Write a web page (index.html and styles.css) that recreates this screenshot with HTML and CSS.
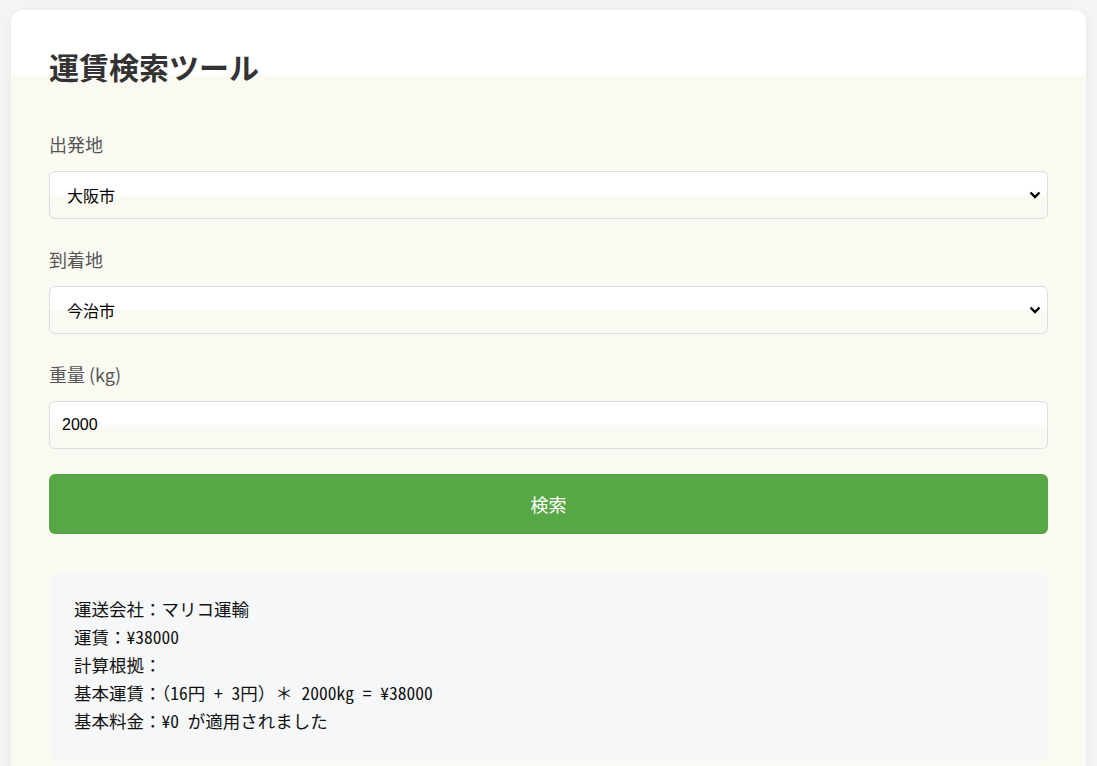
FILE: index.html
```html
<!DOCTYPE html>
<html lang="ja">
<head>
    <meta charset="UTF-8">
    <meta name="viewport" content="width=device-width, initial-scale=1.0">
    <title>運賃検索ツール</title>
    <link rel="stylesheet" href="styles.css">
</head>
<body>
<div class="container">
    <h1>運賃検索ツール</h1>
    <div class="form-group">
        <label for="from">出発地</label>
        <select id="from">
            <option>大阪市</option>
        </select>
    </div>
    <div class="form-group">
        <label for="to">到着地</label>
        <select id="to">
            <option>今治市</option>
        </select>
    </div>
    <div class="form-group last">
        <label for="weight">重量 (kg)</label>
        <input type="number" id="weight" value="2000">
    </div>
    <button id="search-button">検索</button>
    <div id="result">
        <p>運送会社：マリコ運輸</p>
        <p>運賃：¥38000</p>
        <p>計算根拠：</p>
        <p>基本運賃：（16円 + 3円）＊ 2000kg = ¥38000</p>
        <p>基本料金：¥0 が適用されました</p>
    </div>
</div>
</body>
</html>
```

FILE: styles.css
```css
body {
    margin: 0;
    padding: 10px 11px;
    background-color: #f3f4f5;
    font-family: "Noto Sans CJK JP", "Noto Sans", sans-serif;
    color: #333;
}

.container {
    background: linear-gradient(#ffffff 65px, #fafaf3 65px);
    border-radius: 12px;
    box-shadow: 0 2px 10px rgba(0, 0, 0, 0.06);
    padding: 40px 38px 40px;
}

h1 {
    font-size: 30px;
    line-height: 34px;
    font-weight: 700;
    margin: -1px 0 48px;
    color: #333;
}

.form-group {
    margin-bottom: 27px;
}

.form-group.last {
    margin-bottom: 25px;
}

label {
    display: block;
    font-size: 18px;
    line-height: 27px;
    color: #555;
    margin-bottom: 13px;
}

select, input {
    display: block;
    width: 100%;
    box-sizing: border-box;
    height: 48px;
    padding: 0 12px;
    font-size: 16px;
    border: 1px solid #ddd;
    border-radius: 6px;
    background: linear-gradient(#ffffff 50%, #fafaf3 50%);
    color: #000;
}

select {
    appearance: none;
    padding-left: 17px;
    font-family: "Noto Sans CJK JP", sans-serif;
    background:
        url("data:image/svg+xml;utf8,<svg xmlns='http://www.w3.org/2000/svg' width='12' height='8' viewBox='0 0 12 8'><path d='M1.5 1.5 6 6l4.5-4.5' fill='none' stroke='black' stroke-width='2.4'/></svg>") no-repeat right 6px center,
        linear-gradient(#ffffff 50%, #fafaf3 50%);
}

input {
    font-family: "Liberation Sans", Arial, sans-serif;
}

#search-button {
    display: block;
    width: 100%;
    height: 60px;
    border: none;
    border-radius: 6px;
    background-color: #58a747;
    color: #fff;
    font-size: 18px;
    font-family: "Noto Sans CJK JP", sans-serif;
    cursor: pointer;
}

#result {
    margin: 39px 0 0 2px;
    padding: 22px 23px 26px;
    background-color: #f6f7f8;
    border-radius: 8px;
    font-family: "Noto Sans Mono CJK JP", "Noto Sans CJK JP", monospace;
    font-size: 17.5px;
    line-height: 28px;
    color: #111;
}

#result p {
    margin: 0;
}
```
